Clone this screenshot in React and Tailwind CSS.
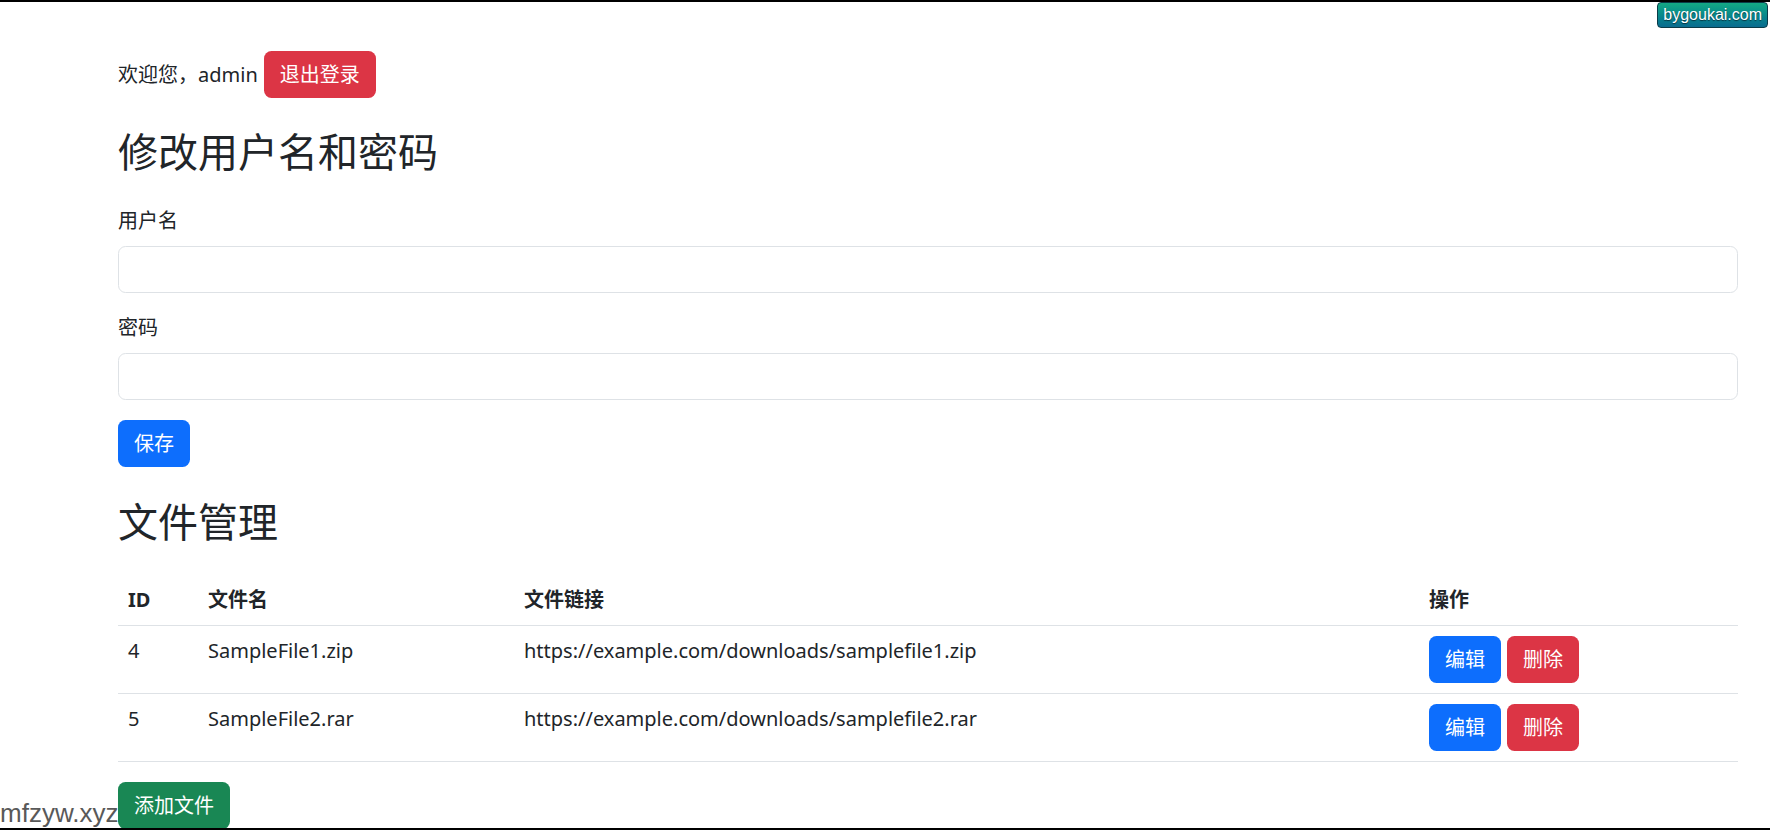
import React from "react";

const files = [
  { id: 4, name: "SampleFile1.zip", link: "https://example.com/downloads/samplefile1.zip" },
  { id: 5, name: "SampleFile2.rar", link: "https://example.com/downloads/samplefile2.rar" },
];

const btn =
  "inline-flex items-center justify-center h-[47px] px-[15px] rounded-[7.5px] border border-transparent text-white text-[20px] leading-[30px]";

export default function App() {
  return (
    <div
      className="relative h-[830px] overflow-hidden border-y-2 border-black bg-white text-[#212529] text-[20px] leading-[30px]"
      style={{ fontFamily: '"Segoe UI", "Noto Sans", "Noto Sans CJK SC", sans-serif' }}
    >
      <div className="ml-[118px] w-[1620px] pt-[49px]">
        {/* welcome */}
        <div className="flex items-center">
          <span>欢迎您，admin</span>
          <button className={`${btn} ml-[6px] bg-[#dc3545]`}>退出登录</button>
        </div>

        <h2 className="mt-[30px] mb-[30px] text-[40px] leading-[48px] font-normal">修改用户名和密码</h2>

        <form onSubmit={(e) => e.preventDefault()}>
          <div className="mb-[20px]">
            <label className="block mb-[10px]">用户名</label>
            <input
              type="text"
              className="block w-full h-[47px] px-[15px] bg-white border border-[#dee2e6] rounded-[7.5px] outline-none"
            />
          </div>
          <div className="mb-[20px]">
            <label className="block mb-[10px]">密码</label>
            <input
              type="password"
              className="block w-full h-[47px] px-[15px] bg-white border border-[#dee2e6] rounded-[7.5px] outline-none"
            />
          </div>
          <button type="submit" className={`${btn} bg-[#0d6efd]`}>保存</button>
        </form>

        <h2 className="mt-[31px] mb-[29px] text-[40px] leading-[48px] font-normal">文件管理</h2>

        <table className="w-full mb-[20px] border-collapse table-fixed">
          <colgroup>
            <col className="w-[80px]" />
            <col className="w-[316px]" />
            <col className="w-[905px]" />
            <col className="w-[319px]" />
          </colgroup>
          <thead>
            <tr className="border-b border-[#dee2e6]">
              <th className="p-[10px] text-left font-bold">ID</th>
              <th className="p-[10px] text-left font-bold">文件名</th>
              <th className="p-[10px] text-left font-bold">文件链接</th>
              <th className="p-[10px] text-left font-bold">操作</th>
            </tr>
          </thead>
          <tbody>
            {files.map((f) => (
              <tr key={f.id} className="border-b border-[#dee2e6] align-top">
                <td className="p-[10px]">{f.id}</td>
                <td className="p-[10px]">{f.name}</td>
                <td className="p-[10px]">{f.link}</td>
                <td className="p-[10px]">
                  <div className="flex gap-[6px]">
                    <button className={`${btn} bg-[#0d6efd]`}>编辑</button>
                    <button className={`${btn} bg-[#dc3545]`}>删除</button>
                  </div>
                </td>
              </tr>
            ))}
          </tbody>
        </table>

        <button className={`${btn} bg-[#198754]`}>添加文件</button>
      </div>

      {/* watermarks */}
      <div
        className="absolute top-0 right-[2px] h-[26px] px-[5px] flex items-center rounded-[4px] border border-[#0a3b48] bg-gradient-to-b from-[#14a883] to-[#0a6b8f] text-white text-[16px] leading-none [text-shadow:0_1px_1px_#06323e]"
        style={{ fontFamily: '"Liberation Sans", Arial, sans-serif' }}
      >
        bygoukai.com
      </div>
      <div
        className="absolute left-0 bottom-0 text-[26px] leading-[30px] text-[#595959]"
        style={{ fontFamily: '"Liberation Sans", Arial, sans-serif' }}
      >
        mfzyw.xyz
      </div>
    </div>
  );
}
